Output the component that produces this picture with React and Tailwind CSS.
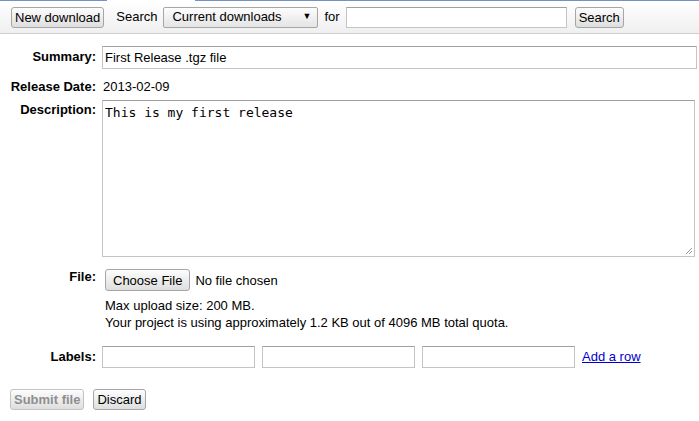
const btn =
  "h-[21px] px-[3px] rounded-[3px] border border-[#a6a6a6] bg-gradient-to-b from-[#fdfdfd] to-[#dedede] text-[13px] leading-none flex items-center";

const field = "h-[23px] border border-[#c4c4c4] border-t-[#a0a0a0] bg-white px-[2px] text-[13px]";

const Label = ({ children, className = "" }) => (
  <div className={`w-[96px] shrink-0 text-right font-bold text-[13px] leading-4 ${className}`}>{children}</div>
);

export default function App() {
  return (
    <div className="w-[699px] h-[421px] bg-white text-black overflow-hidden" style={{ fontFamily: '"Liberation Sans", Arial, sans-serif' }}>
      {/* tab strip edge */}
      <div className="flex h-px">
        <div className="w-[107px] bg-[#7391c3]" />
        <div className="w-[88px]" />
        <div className="flex-1 bg-[#7391c3]" />
      </div>

      <div className="h-[33px] flex items-center pl-[11px] gap-[6px] border-b border-[#cfcfcf] bg-gradient-to-b from-white to-[#efefef] text-[13px]">
        <button className={`${btn} text-black`}>New download</button>
        <span className="ml-[6px]">Search</span>
        <div className="w-[155px] h-[21px] rounded-[2px] border border-[#a6a6a6] bg-gradient-to-b from-[#fdfdfd] to-[#e4e4e4] flex items-center justify-between pl-[8px] pr-[6px]">
          <span>Current downloads</span>
          <span className="text-[9px]">▼</span>
        </div>
        <span>for</span>
        <div className="w-[221px] h-[21px] border border-[#c4c4c4] border-t-[#a0a0a0] bg-white" />
        <button className={`${btn} text-black ml-[2px] h-[19px] px-[1px]`}>Search</button>
      </div>

      <div className="pr-[2px]">
        <div className="flex gap-[6px] mt-[12px]">
          <Label className="pt-[3px]">Summary:</Label>
          <div className={`${field} flex-1 flex items-center`}>First Release .tgz file</div>
        </div>

        <div className="flex gap-[6px] mt-[10px] text-[13px] leading-4">
          <Label>Release Date:</Label>
          <span className="ml-px">2013-02-09</span>
        </div>

        <div className="flex gap-[6px] mt-[5px]">
          <Label className="pt-[2px]">Description:</Label>
          <div
            className="flex-1 mr-[2px] h-[157px] border border-[#c4c4c4] border-t-[#a0a0a0] px-[2px] pt-[4px] relative text-[13px] leading-4"
            style={{ fontFamily: '"DejaVu Sans Mono", monospace' }}
          >
            This is my first release
            <svg className="absolute right-[1px] bottom-[1px]" width="8" height="8" viewBox="0 0 8 8">
              <path d="M1 7 L7 1 M4 7 L7 4" stroke="#999" strokeWidth="1" />
            </svg>
          </div>
        </div>

        <div className="flex gap-[6px] mt-[11px]">
          <Label className="pt-[1px]">File:</Label>
          <div className="flex-1 text-[13px] leading-[17px] pl-[3px]">
            <div className="flex items-center gap-[5px] mt-px">
              <button className="h-[22px] px-[7px] rounded-[3px] border border-[#a6a6a6] bg-gradient-to-b from-[#fdfdfd] to-[#dedede] text-[13px] leading-none">
                Choose File
              </button>
              <span>No file chosen</span>
            </div>
            <div className="mt-[6px]">Max upload size: 200 MB.</div>
            <div>Your project is using approximately 1.2 KB out of 4096 MB total quota.</div>
          </div>
        </div>

        <div className="flex items-center gap-[6px] mt-[15px]">
          <Label>Labels:</Label>
          <div className="flex items-center gap-[7px] text-[13px]">
            <div className="w-[153px] h-[22px] border border-[#c4c4c4] border-t-[#a0a0a0]" />
            <div className="w-[153px] h-[22px] border border-[#c4c4c4] border-t-[#a0a0a0]" />
            <div className="w-[153px] h-[22px] border border-[#c4c4c4] border-t-[#a0a0a0]" />
            <a href="#" className="text-[#0000cc] underline">Add a row</a>
          </div>
        </div>

        <div className="flex gap-[9px] mt-[21px] pl-[10px]">
          <button className={`${btn} h-[20px] px-[2px] font-bold text-[#8f8f8f] border-[#c2c2c2]`}>Submit file</button>
          <button className={`${btn} h-[20px] px-[2px] text-black`}>Discard</button>
        </div>
      </div>
    </div>
  );
}
